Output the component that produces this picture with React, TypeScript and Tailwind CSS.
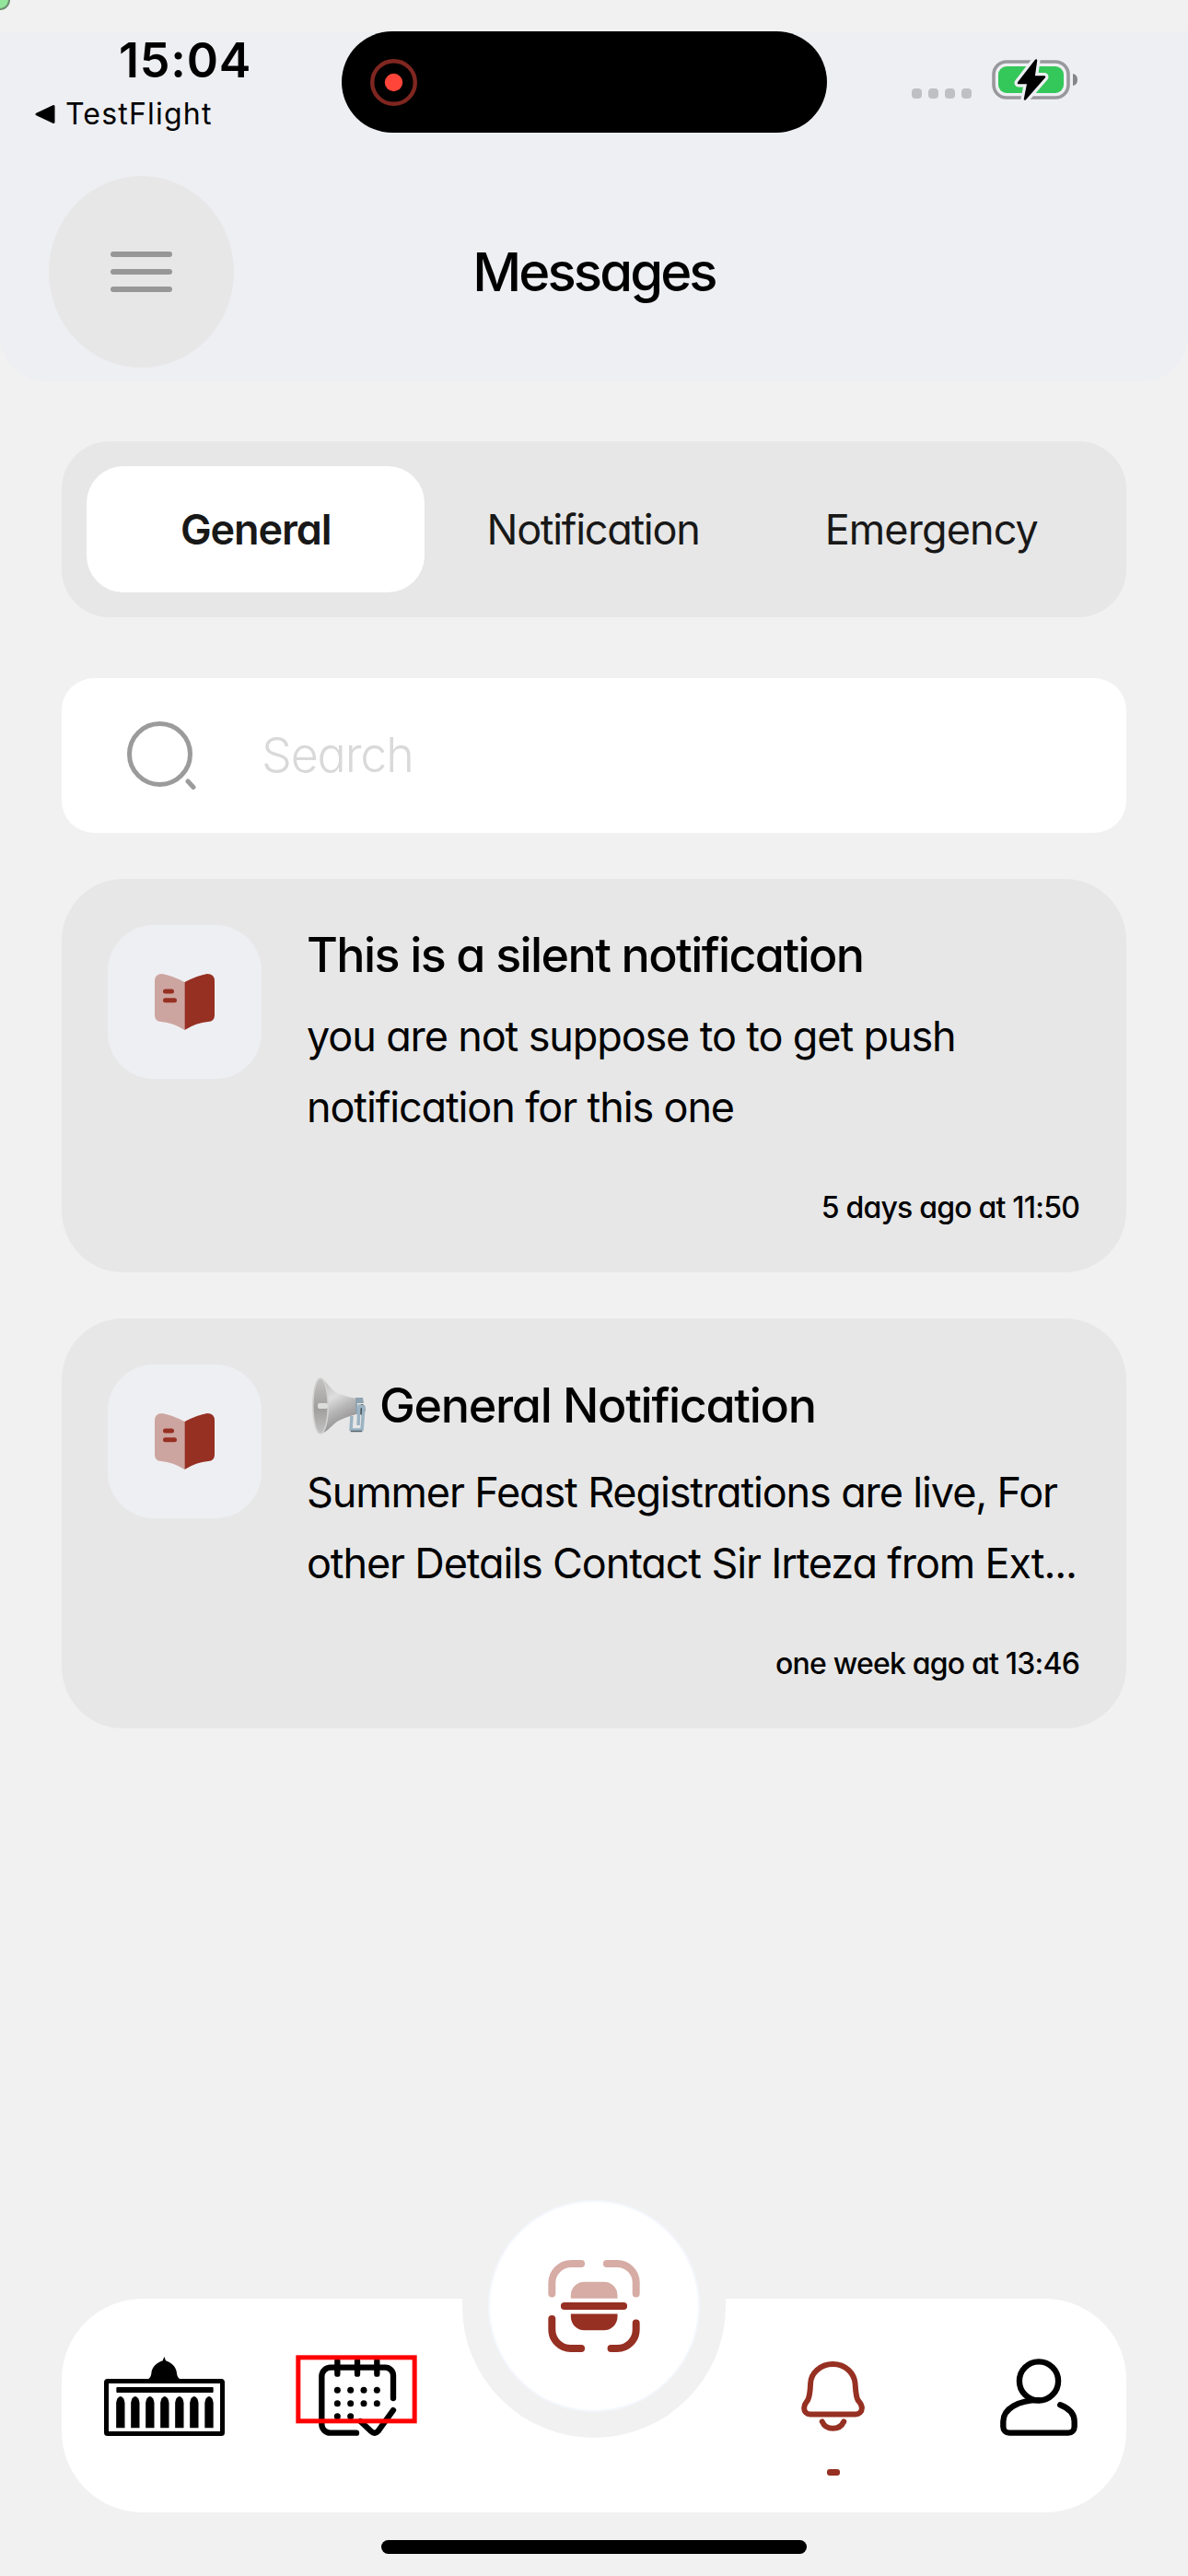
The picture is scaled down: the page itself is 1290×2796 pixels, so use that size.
import type { ReactNode } from "react";

function StatusBar() {
  return (
    <div className="flex h-[157px]">
      <div className="w-[371px] shrink-0">
        <div className="h-[62px] pl-[129px] text-[52px] leading-[63px] font-semibold tracking-[0.8px]">15:04</div>
        <div className="flex h-[56px] items-center pl-[38px]">
          <svg viewBox="0 0 22 22" className="h-[22px] w-[22px]">
            <path d="M2 11 L20 2.500 V19.500Z" fill="#000" stroke="#000" strokeWidth="3" strokeLinejoin="round" />
          </svg>
          <span className="pl-[11px] text-[32px] leading-[56px] tracking-[1.2px]">TestFlight</span>
        </div>
      </div>
      <div className="flex h-[110px] w-[527px] shrink-0 items-center rounded-full bg-black pl-[31px]">
        <svg viewBox="0 0 51 51" className="h-[51px] w-[51px]">
          <circle cx="25.500" cy="25.500" r="23.300" fill="none" stroke="#7f2620" strokeWidth="4.400" />
          <circle cx="25.500" cy="25.500" r="9.700" fill="#ff453a" />
        </svg>
      </div>
      <div className="flex flex-1 items-start pl-[92px]">
        <div className="mt-[62px] flex gap-[7px]">
          {[0, 1, 2, 3].map((n) => (
            <span key={n} className="h-[11px] w-[11px] rounded-[4px] bg-[#bfc0c4]" />
          ))}
        </div>
        <svg viewBox="0 0 96 50" className="mt-[28px] ml-[20px] h-[50px] w-[96px]">
          <rect x="4" y="5" width="81" height="39" rx="14" fill="none" stroke="#98989d" strokeWidth="3.600" />
          <rect x="9" y="10" width="71" height="29" rx="9" fill="#34c759" />
          <path d="M90 18 Q95 19 95 24.500 Q95 30 90 31Z" fill="#85858a" />
          <path
            d="M50 3.500 L31 28 H41.500 L38 45.500 L59 21.500 H47.500Z"
            fill="#000"
            stroke="#eeeff3"
            strokeWidth="9"
            strokeLinejoin="round"
          />
          <path
            d="M50 3.500 L31 28 H41.500 L38 45.500 L59 21.500 H47.500Z"
            fill="#000"
            stroke="#000"
            strokeWidth="2.500"
            strokeLinejoin="round"
          />
        </svg>
      </div>
    </div>
  );
}

function TitleBar() {
  return (
    <div className="grid h-[208px] grid-cols-[201px_1fr_201px] items-center px-[53px]">
      <button className="flex h-[208px] w-[201px] flex-col items-center justify-center gap-[13px] rounded-[50%] bg-[#e7e7e7]">
        <span className="h-[6px] w-[67px] rounded-full bg-[#979797]" />
        <span className="h-[6px] w-[67px] rounded-full bg-[#979797]" />
        <span className="h-[6px] w-[67px] rounded-full bg-[#979797]" />
      </button>
      <h1 className="text-center text-[58px] leading-[70px] font-medium tracking-[-2.9px]">Messages</h1>
    </div>
  );
}

function Tabs() {
  return (
    <div className="mt-[65px] grid h-[191px] grid-cols-3 rounded-[52px] bg-[#e7e7e7] p-[27px] text-center text-[45px] leading-[137px] font-normal text-[#181818]">
      <button className="rounded-[40px] bg-white font-semibold tracking-[-1.1px]">General</button>
      <button className="pr-[2px] tracking-[-1.3px]">Notification</button>
      <button className="pr-[2px] tracking-[-0.9px]">Emergency</button>
    </div>
  );
}

function SearchBox() {
  return (
    <div className="mt-[66px] flex h-[168px] items-center rounded-[35px] bg-white pl-[70px]">
      <svg viewBox="0 0 78 76" className="h-[76px] w-[78px]" fill="none" stroke="#9b9b9b" strokeLinecap="round">
        <circle cx="36.500" cy="36.500" r="33" strokeWidth="5" />
        <path d="M67 66 L73 72.500" strokeWidth="5" />
      </svg>
      <span className="pl-[69px] text-[52px] leading-[60px] font-light tracking-[-1.2px] text-[#d9d9d9]">Search</span>
    </div>
  );
}

function BookIcon() {
  return (
    <svg viewBox="0 0 65 61" className="h-[61px] w-[65px]">
      <path d="M0 8 Q0 0 8 0 Q18 1.500 32.500 9 V61 Q20 53 7 52 Q0 51.500 0 45Z" fill="#cda5a0" />
      <path d="M65 8 Q65 0 57 0 Q47 1.500 32.500 9 V61 Q45 53 58 52 Q65 51.500 65 45Z" fill="#963022" />
      <path d="M11.500 19 H18.500 M11.500 28.700 H21.500" stroke="#963022" strokeWidth="5" strokeLinecap="round" />
    </svg>
  );
}

function Megaphone() {
  return (
    <svg viewBox="0 0 58 63" className="h-[63px] w-[58px]">
      <defs>
        <linearGradient id="horn" x1="0" y1="0" x2="0.350" y2="1">
          <stop offset="0" stopColor="#b5b5b5" />
          <stop offset="0.420" stopColor="#dedede" />
          <stop offset="0.650" stopColor="#b9b8b8" />
          <stop offset="1" stopColor="#8d8b8b" />
        </linearGradient>
        <linearGradient id="bell" x1="0" y1="0" x2="0" y2="1">
          <stop offset="0" stopColor="#c4c3c2" />
          <stop offset="0.550" stopColor="#a09e9d" />
          <stop offset="1" stopColor="#c2c2c2" />
        </linearGradient>
      </defs>
      <ellipse cx="54" cy="35" rx="3.500" ry="6" fill="#3f454b" />
      <path d="M8 1 C15 2 18 12 27 17 Q38 21 48 23 V40 Q36 43 27 48 C20 53 15 61 8 61Z" fill="url(#horn)" />
      <ellipse cx="9" cy="31" rx="8.200" ry="30" fill="url(#bell)" stroke="#d2d2d1" strokeWidth="1.600" />
      <rect x="6" y="28" width="11" height="6" rx="2" fill="#dcdcdb" />
      <path d="M47 22 H55 L56 28 H49 V40 H47Z" fill="#8fa3b0" />
      <path d="M43 42 L42 57 H54 L56 32 L51 31 L50 52" fill="none" stroke="#9bb3c2" strokeWidth="3.500" strokeLinejoin="round" />
      <path d="M42 58.500 H54" stroke="#56646e" strokeWidth="1.500" />
    </svg>
  );
}

type CardProps = { heading: ReactNode; lines: string[]; time: string };

function MessageCard({ heading, lines, time }: CardProps) {
  return (
    <article className="flex gap-[49px] rounded-[67px] bg-[#e7e7e7] p-[50px]">
      <div className="flex h-[167px] w-[167px] shrink-0 items-center justify-center rounded-[50px] bg-[#eeeff3]">
        <BookIcon />
      </div>
      <div className="min-w-0 flex-1 whitespace-nowrap">
        {heading}
        <p className="text-[45px] leading-[77px] font-normal tracking-[-1.13px]">
          {lines.map((line) => (
            <span key={line} className="block">
              {line}
            </span>
          ))}
        </p>
        <p className="mt-[50px] pr-[1px] text-right text-[32px] leading-[41px] font-medium tracking-[-0.8px]">{time}</p>
      </div>
    </article>
  );
}

function BuildingIcon() {
  return (
    <svg viewBox="159 264 393 258" className="h-[86px] w-[131px]">
      <rect x="166.500" y="343.500" width="378" height="171" rx="4" fill="none" stroke="#000" strokeWidth="15" />
      <path d="M301 338 Q312 332 313 318 C315 294 335 283 350 277 L355 264 L360 277 C375 283 394 294 396 318 Q397 332 408 338Z" />
      <rect x="199" y="363" width="316" height="18" rx="3" />
      {[212.5, 260.5, 308.5, 356.5, 404.5, 452.5, 501].map((x) => (
        <path key={x} d={`M${x - 14} 496 V414 Q${x - 12} 396 ${x} 393 Q${x + 12} 396 ${x + 14} 414 V496Z`} />
      ))}
    </svg>
  );
}

const calendarDots = [
  [919, 373], [962, 373], [1005, 373], [1048, 373],
  [919, 416], [962, 416], [1005, 416], [1048, 416],
  [919, 458], [962, 458],
];

function CalendarIcon() {
  return (
    <svg viewBox="783 258 396 264" className="h-[88px] w-[132px]" fill="none">
      <g stroke="#000" strokeWidth="19" strokeLinecap="round" strokeLinejoin="round">
        <path d="M1101 399 V325 a26 26 0 0 0 -26 -26 H897 a29 29 0 0 0 -29 29 V484 a28 28 0 0 0 28 28 H981" />
        <path d="M919 278 V320 M984 278 V320 M1048 278 V320" />
        <path d="M1101 438 L1052 506 Q1041 518 1029 507 L994 474" />
      </g>
      {calendarDots.map(([x, y]) => (
        <circle key={`${x}-${y}`} cx={x} cy={y} r="10.500" fill="#000" />
      ))}
      <rect x="791.500" y="266.500" width="379" height="207" stroke="#f00" strokeWidth="15" />
    </svg>
  );
}

function BellIcon() {
  return (
    <svg viewBox="149 278 207 229" className="h-[76px] w-[69px]" fill="none" stroke="#963022" strokeWidth="18" strokeLinecap="round">
      <path d="M252 287 C210 287 180 318 179 350 C178 375 177 392 170 405 C164 413 158 418 158 431 C158 443 167 451 178 451 H326 C338 451 347 443 347 431 C347 418 340 413 334 405 C327 392 327 375 325 350 C322 318 295 287 252 287Z" />
      <path d="M217 475 C230 505 274 505 288 475" />
    </svg>
  );
}

function PersonIcon() {
  return (
    <svg viewBox="797 269 251 251" className="h-[84px] w-[84px]" fill="none" stroke="#000" strokeWidth="19" strokeLinecap="round">
      <circle cx="922.500" cy="342" r="63" />
      <path d="M922 404 C857 404 807 432 807 473 V490 a20 20 0 0 0 20 20 H1018 a20 20 0 0 0 20 -20 V473 C1038 445 1015 428 992 419" />
    </svg>
  );
}

function ScanIcon() {
  return (
    <svg viewBox="404 249 302 302" className="h-[100px] w-[100px]" fill="none" strokeWidth="24" strokeLinecap="round">
      <g stroke="#d6aca5">
        <path d="M417 359 V325 a64 64 0 0 1 64 -64 H513" />
        <path d="M597 261 H631 a62 62 0 0 1 62 62 V359" />
      </g>
      <g stroke="#963022">
        <path d="M417 442 V477 a62 62 0 0 0 62 62 H513" />
        <path d="M693 456 V477 a62 62 0 0 1 -62 62 H611" />
        <path d="M458 400 H652" />
      </g>
      <path d="M479 375 V365 a44 44 0 0 1 44 -44 H588 a44 44 0 0 1 44 44 V375Z" fill="#d6aca5" />
      <path d="M479 426 V435 a44 44 0 0 0 44 44 H588 a44 44 0 0 0 44 -44 V426Z" fill="#963022" />
    </svg>
  );
}

function BottomNav() {
  return (
    <nav className="relative mx-[67px] mt-auto h-[232px]">
      <div className="relative h-[232px] overflow-hidden rounded-[88px] bg-white">
        <div className="absolute -top-[135px] left-[435px] h-[286px] w-[286px] rounded-full bg-[#f1f1f1]" />
        <div className="relative flex items-start pt-[61px]">
          <div className="ml-[46px] pt-[2px]"><BuildingIcon /></div>
          <div className="ml-[77px]"><CalendarIcon /></div>
          <div className="ml-[417px] flex flex-col items-center pt-[7px]">
            <BellIcon />
            <span className="mt-[41px] h-[7px] w-[14px] rounded-[3px] bg-[#963022]" />
          </div>
          <div className="ml-[147px] pt-[4px]"><PersonIcon /></div>
        </div>
      </div>
      <button className="absolute -top-[107px] left-[463px] flex h-[230px] w-[230px] items-center justify-center rounded-full border-2 border-[#f4f7fd] bg-white">
        <ScanIcon />
      </button>
    </nav>
  );
}

export default function App() {
  return (
    <div className="relative flex h-[2796px] w-[1290px] flex-col overflow-hidden bg-[#f1f1f1] pt-[34px] font-['Inter',sans-serif] text-black [font-feature-settings:'cv11']">
      <div className="absolute -top-[11px] -left-[11px] h-[22px] w-[22px] rounded-full border-2 border-[#6d8f70] bg-[#93e59b]" />
      <header className="h-[380px] rounded-b-[50px] bg-[#eeeff3]">
        <StatusBar />
        <TitleBar />
      </header>
      <main className="px-[67px]">
        <Tabs />
        <SearchBox />
        <section className="mt-[50px] flex flex-col gap-[50px]">
          <MessageCard
            heading={
              <h2 className="mb-[16px] text-[52px] leading-[66px] font-medium tracking-[-1.6px]">
                This is a silent notification
              </h2>
            }
            lines={["you are not suppose to to get push", "notification for this one"]}
            time="5 days ago at 11:50"
          />
          <MessageCard
            heading={
              <h2 className="mb-[10px] flex h-[90px] items-center text-[52px] leading-[90px] font-medium tracking-[-1.3px]">
                <span className="mr-[15px] ml-[6px]">
                  <Megaphone />
                </span>
                General Notification
              </h2>
            }
            lines={["Summer Feast Registrations are live, For", "other Details Contact Sir Irteza from Ext..."]}
            time="one week ago at 13:46"
          />
        </section>
      </main>
      <BottomNav />
      <div className="mx-auto mt-[30px] mb-[24px] h-[15px] w-[462px] shrink-0 rounded-full bg-black" />
    </div>
  );
}
